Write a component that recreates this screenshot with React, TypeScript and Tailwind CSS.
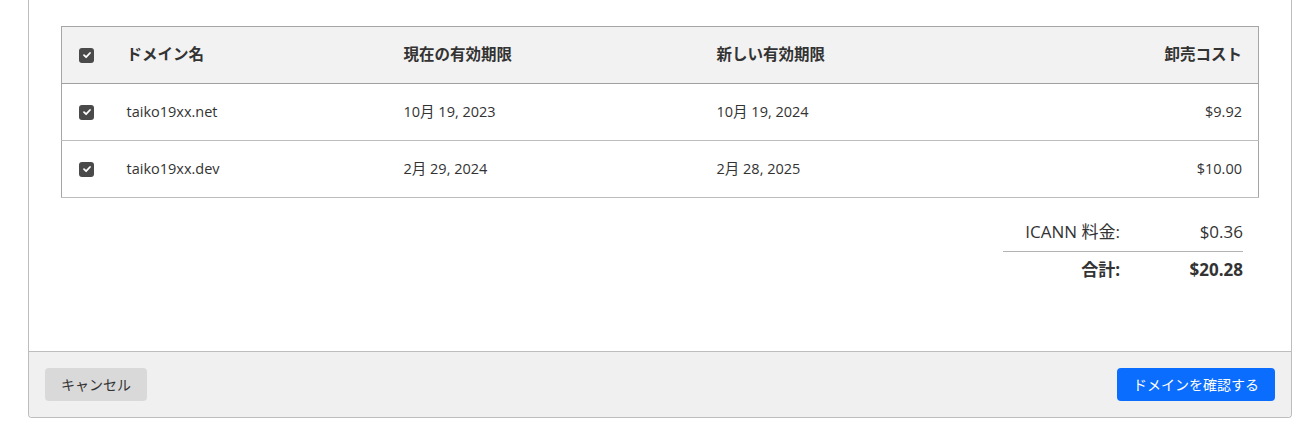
import React from "react";

interface Row {
  domain: string;
  current: string;
  next: string;
  cost: string;
}

const rows: Row[] = [
  { domain: "taiko19xx.net", current: "10月 19, 2023", next: "10月 19, 2024", cost: "$9.92" },
  { domain: "taiko19xx.dev", current: "2月 29, 2024", next: "2月 28, 2025", cost: "$10.00" },
];

const Check = () => (
  <span className="flex h-[15px] w-[15px] items-center justify-center rounded-[3px] bg-[#4a4a4a]">
    <svg width="10" height="10" viewBox="0 0 10 10" fill="none">
      <path d="M2 5.2 L4.1 7.2 L8 3" stroke="#fff" strokeWidth="1.8" strokeLinecap="round" strokeLinejoin="round" />
    </svg>
  </span>
);

const App = () => {
  return (
    <div
      className="min-h-screen bg-white pl-[28px] pr-[9px] pb-[8px] text-[#333]"
      style={{ fontFamily: '"Open Sans", "Noto Sans CJK JP", sans-serif' }}
    >
      <div className="rounded-b-[4px] border-x border-b border-[#bdbdbd]">
        <div className="px-[32px] pt-[26px] pb-[69px]">
          <table className="w-full table-fixed border-collapse border border-[#a6a6a6] text-[14.5px]">
            <colgroup>
              <col className="w-[49px]" />
              <col className="w-[277px]" />
              <col className="w-[313px]" />
              <col className="w-[300px]" />
              <col />
            </colgroup>
            <thead>
              <tr className="h-[57px] border-b border-[#a0a0a0] bg-[#f2f2f2] text-[15.5px] font-bold">
                <th className="pl-[17px] text-left">
                  <Check />
                </th>
                <th className="px-[16px] text-left">ドメイン名</th>
                <th className="px-[16px] text-left">現在の有効期限</th>
                <th className="px-[16px] text-left">新しい有効期限</th>
                <th className="px-[16px] text-right">卸売コスト</th>
              </tr>
            </thead>
            <tbody>
              {rows.map((r) => (
                <tr key={r.domain} className="h-[57px] border-b border-[#bcbcbc]">
                  <td className="pl-[17px]">
                    <Check />
                  </td>
                  <td className="px-[16px]">{r.domain}</td>
                  <td className="px-[16px]">{r.current}</td>
                  <td className="px-[16px]">{r.next}</td>
                  <td className="px-[16px] text-right">{r.cost}</td>
                </tr>
              ))}
            </tbody>
          </table>

          <div className="flex justify-end pr-[16px] pt-[21px]">
            <div className="w-[240px] text-[17px]">
              <div className="grid grid-cols-[117px_1fr] pb-[6px] text-right">
                <span>ICANN 料金:</span>
                <span>$0.36</span>
              </div>
              <div className="grid grid-cols-[117px_1fr] border-t border-[#b3b3b3] pt-[5px] text-right font-bold">
                <span>合計:</span>
                <span>$20.28</span>
              </div>
            </div>
          </div>
        </div>

        <div className="flex items-center justify-between rounded-b-[4px] border-t border-[#bdbdbd] bg-[#f0f0f0] px-[16px] py-[16px]">
          <button className="h-[33px] rounded-[4px] bg-[#d9d9d9] px-[16px] text-[14px] text-[#333]">
            キャンセル
          </button>
          <button className="h-[33px] rounded-[4px] bg-[#0a6dfe] px-[16px] text-[14px] text-white">
            ドメインを確認する
          </button>
        </div>
      </div>
    </div>
  );
};

export default App;
